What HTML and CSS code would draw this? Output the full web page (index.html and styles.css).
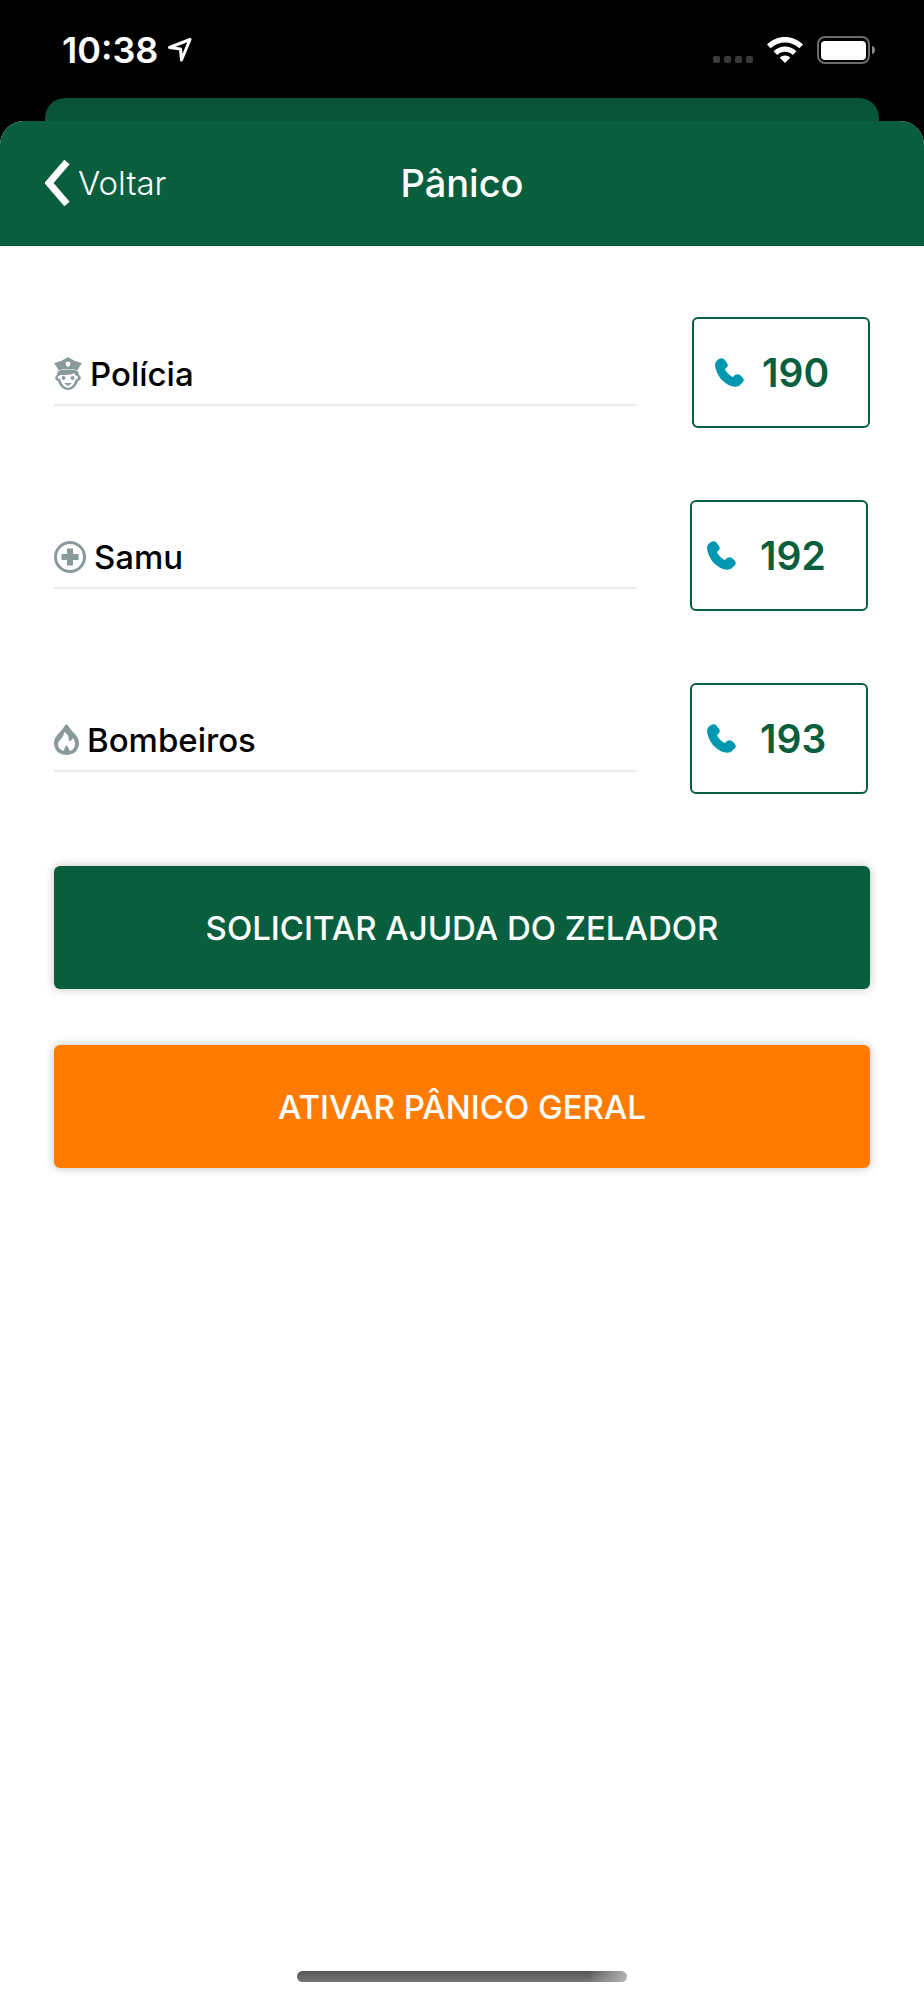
FILE: index.html
```
<!DOCTYPE html>
<html lang="pt-BR">
<head>
    <meta charset="UTF-8">
    <meta name="viewport" content="width=device-width, initial-scale=1.0">
    <title>Pânico</title>
    <link rel="stylesheet" href="styles.css">
</head>
<body>
    <svg class="sprite" aria-hidden="true">
        <symbol id="phone" viewBox="0 0 29 29">
            <path d="M0 7C0 4 2 2 4 1C6 0 7 0 9 1L12 5C13 7 13 8 12 9L10 11C11 14 15 18 18 19L20 17C22 16 23 16 25 17L28 20C29 22 29 23 28 24L25 27C23 29 20 29 16 28C8 25 1 17 0 7Z"/>
        </symbol>
    </svg>

    <div class="status-bar">
        <div class="status-left">
            <span class="time">10:38</span>
            <svg class="location" viewBox="0 0 24 24">
                <path d="M1.500 9.500L22 1.500L13.500 22L12.500 11Z"/>
            </svg>
        </div>
        <div class="status-right">
            <div class="signal"><i></i><i></i><i></i><i></i></div>
            <svg class="wifi" viewBox="0 0 36 27">
                <path d="M0 7.600C10 -2.500 26 -2.500 36 7.600L32.300 11.200C24.500 3.600 11.500 3.600 3.700 11.200Z"/>
                <path d="M6.500 14.200C13 7.800 23 7.800 29.500 14.200L25.800 17.900C21.300 13.600 14.700 13.600 10.200 17.900Z"/>
                <path d="M12.700 20.700C15.500 17.900 20.500 17.900 23.300 20.700L18 26Z"/>
            </svg>
            <svg class="battery" viewBox="0 0 59 28">
                <rect x="1" y="1" width="51" height="26" rx="7" fill="none" stroke="#6b6b6b" stroke-width="2"/>
                <rect x="4" y="5" width="45" height="19" rx="4" fill="#fff"/>
                <path d="M55 10C59 11 59 17 55 18Z" fill="#8a8a8a"/>
            </svg>
        </div>
    </div>

    <div class="sheet-behind"></div>

    <div class="sheet">
        <header>
            <a class="back" href="#">
                <svg viewBox="0 0 25 46"><path d="M22 2L4 23L22 44"/></svg>
                Voltar
            </a>
            <h1>Pânico</h1>
        </header>

        <main>
            <div class="contact">
                <div class="label">
                    <svg class="police" viewBox="0 0 28 33">
                        <path d="M14 0C18 3 23 5 28 6L23.500 13C18 11.500 10 11.500 4.500 13L0 6C5 5 10 3 14 0Z"/>
                        <path class="badge" d="M11.500 5.500L14 4.500L16.500 5.500C16.500 8 16 9 14 10C12 9 11.500 8 11.500 5.500Z"/>
                        <path d="M4 14C10 12 18 12 24 14L25 18C28 20 27 23 24 24C22 30 18 33 14 33C10 33 6 30 4 24C1 23 0 20 3 18Z"/>
                        <path class="badge" d="M6 18C12 18 18 18 20 16C21 18 22 19 23 19C25 20 24 22 22 22C20 28 18 30 14 31C10 30 8 28 6 22C3 22 3 19 5 19Z"/>
                        <circle cx="9.500" cy="21" r="2"/>
                        <circle cx="18.500" cy="21" r="2"/>
                        <path d="M10 26H18L14 29Z"/>
                    </svg>
                    Polícia
                </div>
                <button class="call">
                    <svg><use href="#phone"/></svg>
                    190
                </button>
            </div>

            <div class="contact compact">
                <div class="label">
                    <svg class="medical" viewBox="0 0 32 32">
                        <circle cx="16" cy="16" r="14.500"/>
                        <path d="M13 7.500H19V13H24.500V19H19V24.500H13V19H7.500V13H13Z"/>
                    </svg>
                    Samu
                </div>
                <button class="call">
                    <svg><use href="#phone"/></svg>
                    192
                </button>
            </div>

            <div class="contact compact">
                <div class="label">
                    <svg class="fire" viewBox="0 0 25 31">
                        <path d="M12.500 0C15 2 16 5 19 8C23 12 25 15 25 19C25 26 20 31 12.500 31C5 31 0 26 0 19C0 15 2 12 6 8C9 5 10 2 12.500 0Z"/>
                        <path class="flame" d="M10 8C14 10 15 13 15 17C17 17 18 16 19 14C22 18 22 25 16 27C15 26 15 24 12.500 21C11 23 10 25 10 27C4 25 3 21 5 17C8 14 10 12 10 8Z"/>
                    </svg>
                    Bombeiros
                </div>
                <button class="call">
                    <svg><use href="#phone"/></svg>
                    193
                </button>
            </div>

            <button class="action">SOLICITAR AJUDA DO ZELADOR</button>
            <button class="action panic">ATIVAR PÂNICO GERAL</button>
        </main>

        <div class="home-indicator"></div>
    </div>
</body>
</html>
```

FILE: styles.css
```
* {
    box-sizing: border-box;
}

body {
    font-family: 'Inter', 'Liberation Sans', sans-serif;
    background: #000;
    min-height: 100vh;
    margin: 0;
    display: flex;
    flex-direction: column;
}

.sprite {
    display: none;
}

.status-bar {
    display: flex;
    justify-content: space-between;
    height: 98px;
    padding: 0 48px 0 62px;
    color: #fff;
}

.status-left,
.status-right {
    display: flex;
    align-items: center;
    height: 100px;
}

.time {
    font-size: 36px;
    font-weight: 600;
}

.location {
    width: 24px;
    height: 24px;
    margin-left: 10px;
    fill: none;
    stroke: #fff;
    stroke-width: 3;
    stroke-linejoin: round;
}

.signal {
    display: flex;
    gap: 4px;
    margin: 18px 14px 0 0;
}

.signal i {
    width: 7px;
    height: 7px;
    border-radius: 2px;
    background: #3a3a3a;
}

.wifi {
    width: 36px;
    height: 27px;
    margin-right: 14px;
    fill: #fff;
}

.battery {
    width: 59px;
    height: 28px;
}

.sheet-behind {
    height: 23px;
    margin: 0 45px;
    border-radius: 20px 20px 0 0;
    background: #095436;
}

.sheet {
    flex: 1;
    display: flex;
    flex-direction: column;
    border-radius: 24px 24px 0 0;
    overflow: hidden;
    background: #fff;
}

header {
    display: grid;
    grid-template-columns: 1fr auto 1fr;
    align-items: center;
    height: 125px;
    padding: 0 45px;
    background: #095f3d;
    border-bottom: 1px solid #075235;
    color: #fff;
}

.back {
    display: flex;
    align-items: center;
    gap: 8px;
    color: #fff;
    font-size: 33px;
    font-weight: 300;
    text-decoration: none;
}

.back svg {
    width: 25px;
    height: 46px;
    fill: none;
    stroke: #fff;
    stroke-width: 7;
}

h1 {
    margin: 0;
    font-size: 38px;
    font-weight: 500;
}

main {
    flex: 1;
    padding: 71px 54px 0;
}

.contact {
    display: flex;
    align-items: center;
    justify-content: space-between;
    gap: 56px;
    margin-bottom: 72px;
}

.label {
    flex: 1;
    display: flex;
    align-items: center;
    gap: 8px;
    height: 66px;
    padding-top: 4px;
    border-bottom: 2px solid #e5eceb;
    color: #000;
    font-size: 33px;
    font-weight: 500;
}

.label svg {
    fill: #8a9a9a;
}

.label .police {
    width: 28px;
    height: 33px;
}

.label .medical {
    width: 32px;
    height: 32px;
}

.medical circle {
    fill: none;
    stroke: #8a9a9a;
    stroke-width: 3;
}

.label .fire {
    width: 25px;
    height: 31px;
}

.badge,
.flame {
    fill: #fff;
}

button {
    font-family: inherit;
    cursor: pointer;
}

.call {
    display: flex;
    align-items: center;
    gap: 18px;
    width: 178px;
    height: 111px;
    padding: 0 21px;
    background: #fff;
    border: 2px solid #095f3d;
    border-radius: 6px;
    color: #095f3d;
    font-size: 39px;
    font-weight: 600;
}

.call svg {
    width: 29px;
    height: 29px;
    fill: #0097b0;
}

.compact {
    gap: 54px;
    padding-right: 2px;
}

.compact .call {
    gap: 24px;
    padding: 0 15px;
}

.action {
    display: block;
    width: 100%;
    height: 123px;
    margin-bottom: 56px;
    background: #095f3d;
    border: none;
    border-radius: 6px;
    box-shadow: 0 0 10px rgba(0,0,0,0.25);
    color: #fff;
    font-size: 33px;
    font-weight: 500;
}

.panic {
    background: #ff7b00;
}

.home-indicator {
    width: 330px;
    height: 11px;
    margin: 0 auto 18px;
    border-radius: 6px;
    background: linear-gradient(100deg, transparent 88%, #b5b5b5), linear-gradient(#555, #777);
}
```
